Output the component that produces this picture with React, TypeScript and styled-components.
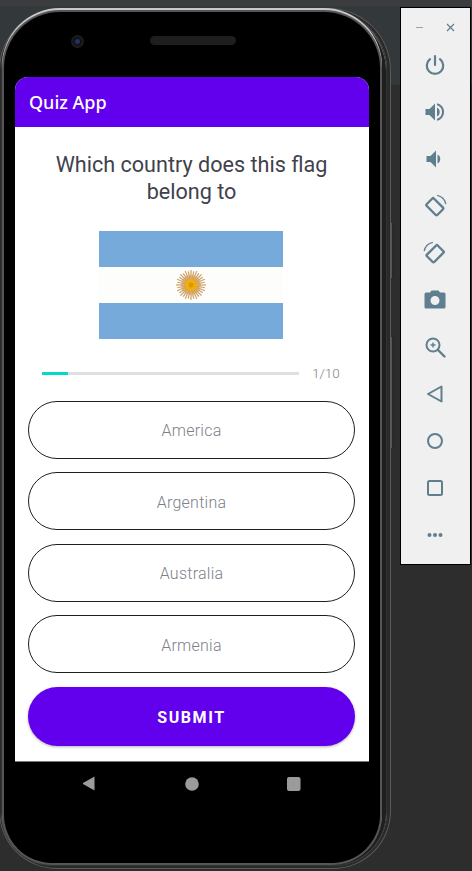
import React from "react";
import styled, { createGlobalStyle } from "styled-components";

const Global = createGlobalStyle`
  html, body { margin: 0; padding: 0; background: #2d2d2d; }
  * { box-sizing: border-box; }
`;

const Stage = styled.div`
  width: 472px;
  height: 871px;
  overflow: hidden;
  position: relative;
  background: linear-gradient(#3a3c3e 0, #3a3c3e 6px, #33383a 6px, #33383a 85px, #2d2d2d 85px);
  display: flex;
  align-items: flex-start;
`;

const Phone = styled.div`
  flex: none;
  margin: 8px 0 0 -1px;
  width: 392px;
  height: 861px;
  border-radius: 62px 62px 58px 58px;
  background: #2a2a2a;
  box-shadow: inset 0 0 0 1px #5a5a5a;
  padding: 2px 4px 3px 2px;
  position: relative;
`;

const Rim = styled.div`
  width: 100%;
  height: 100%;
  border-radius: 60px 60px 54px 54px;
  background: #1e1e1e;
  padding: 2px 7px 3px 3px;
  box-shadow: inset 0 0 0 1px #333, inset 0 1px 0 1px #8a8a8a;
`;

const Bezel = styled.div`
  width: 100%;
  height: 100%;
  border-radius: 56px 56px 48px 48px;
  background: #000;
  box-shadow: 0 0 0 2px #555, 0 -2px 0 2px #c8c8c8;
  padding: 65px 9px 0 11px;
  position: relative;
`;

const SideKey = styled.div<{ $top: number; $height: number }>`
  position: absolute;
  left: 392px;
  top: ${(p) => p.$top}px;
  width: 4px;
  height: ${(p) => p.$height}px;
  background: #2a2a2a;
  border-left: 1px solid #555;
`;

const Camera = styled.div`
  position: absolute;
  left: 67px;
  top: 23px;
  width: 13px;
  height: 13px;
  border-radius: 50%;
  background: radial-gradient(circle, #26305f 0 2px, #101014 3px, #1e1e1e 6px);
`;

const Speaker = styled.div`
  position: absolute;
  left: 146px;
  top: 24px;
  width: 86px;
  height: 9px;
  border-radius: 5px;
  background: #1e1e1e;
`;

const Screen = styled.div`
  width: 354px;
  height: 685px;
  background: #fff;
  border-radius: 13px 13px 0 0;
  overflow: hidden;
  display: flex;
  flex-direction: column;
`;

const AppBar = styled.div`
  flex: none;
  height: 50px;
  background: #6200ee;
  color: #fff;
  padding-left: 14px;
  display: flex;
  align-items: center;
  font: 500 18px "Noto Sans", sans-serif;
`;

const Content = styled.div`
  flex: 1;
  padding: 24px 14px 0 13px;
  display: flex;
  flex-direction: column;
  align-items: center;
`;

const Question = styled.div`
  width: 300px;
  text-align: center;
  color: #3f424c;
  font: 400 21.6px/27px Roboto, sans-serif;
`;

const Flag = styled.svg`
  display: block;
  margin: 26px 1px 0 0;
  flex: none;
`;

const ProgressRow = styled.div`
  width: 100%;
  margin: 25px 0 5px;
  padding: 0 1px 0 14px;
  height: 18px;
  display: flex;
  align-items: center;
`;

const Track = styled.div`
  width: 257px;
  height: 3px;
  margin-top: 1px;
  background: #e0e0e0;
`;

const Fill = styled.div`
  height: 100%;
  background: #03dac5;
`;

const Count = styled.span`
  margin-left: 13px;
  color: #7d8089;
  font: 300 13.5px Roboto, sans-serif;
`;

const Option = styled.div`
  flex: none;
  width: 327px;
  height: 58px;
  margin-top: 13.6px;
  padding-top: 2px;
  border: 1px solid #1f1f1f;
  border-radius: 29px;
  display: flex;
  align-items: center;
  justify-content: center;
  color: #7d8089;
  font: 300 16px Roboto, sans-serif;
  letter-spacing: 0.25px;
`;

const Submit = styled.div`
  flex: none;
  width: 327px;
  height: 59px;
  margin-top: 14px;
  padding-top: 2px;
  border-radius: 30px;
  background: #6200ee;
  color: #fff;
  display: flex;
  align-items: center;
  justify-content: center;
  letter-spacing: 1.6px;
  font: 700 16px Roboto, sans-serif;
  box-shadow: 0 1px 3px rgba(0, 0, 0, 0.3);
`;

const NavBar = styled.div`
  width: 354px;
  height: 44px;
  border-top: 1px solid #777;
  margin-top: -1px;
  display: flex;
  align-items: center;
  justify-content: center;
`;

const NavIcon = styled.svg`
  display: block;
  margin: 0 44px;
`;

const Panel = styled.div`
  flex: none;
  margin: 7px 0 0 9px;
  width: 71px;
  height: 558px;
  background: #f0f0f0;
  border: 1px solid #000;
  color: #5f7f8f;
  display: flex;
  flex-direction: column;
  align-items: center;
`;

const WindowControls = styled.div`
  height: 33px;
  width: 100%;
  padding: 6px 15px 0 14px;
  display: flex;
  align-items: center;
  justify-content: space-between;
`;

const ToolButton = styled.div`
  flex: none;
  height: 47px;
  width: 100%;
  padding-right: 2px;
  display: flex;
  align-items: center;
  justify-content: center;
`;

const Ico: React.FC<{ children: React.ReactNode; s?: number }> = ({ children, s = 24 }) => (
  <svg width={s} height={s} viewBox="0 0 24 24" fill="currentColor">
    {children}
  </svg>
);

const strokeProps = { fill: "none", stroke: "currentColor", strokeWidth: 2 };

const Sun = () => {
  const rays = Array.from({ length: 32 }, (_, i) => i * 11.25);
  return (
    <g>
      {rays.map((a) => (
        <line
          key={a}
          x1="92"
          y1="54"
          x2="92"
          y2={a % 22.5 === 0 ? 39 : 40}
          stroke="#cf9f5f"
          strokeWidth="1.2"
          transform={`rotate(${a} 92 54)`}
        />
      ))}
      <circle cx="92" cy="54" r="10" fill="#cf9f5f" opacity="0.6" />
      <circle cx="92" cy="54" r="6" fill="#f3ad05" />
      <circle cx="92" cy="54" r="2.4" fill="#d89604" />
    </g>
  );
};

export default function App() {
  return (
    <Stage>
      <Global />
      <Phone>
        <Rim>
          <Bezel>
            <Camera />
            <Speaker />
            <Screen>
              <AppBar>Quiz App</AppBar>
              <Content>
                <Question>Which country does this flag belong to</Question>
                <Flag width="184" height="108" viewBox="0 0 184 108">
                  <rect width="184" height="108" fill="#fdfdfb" />
                  <rect width="184" height="36" fill="#75aadb" />
                  <rect y="72" width="184" height="36" fill="#75aadb" />
                  <Sun />
                </Flag>
                <ProgressRow>
                  <Track>
                    <Fill style={{ width: `${(1 / 10) * 100}%` }} />
                  </Track>
                  <Count>1/10</Count>
                </ProgressRow>
                <Option>America</Option>
                <Option>Argentina</Option>
                <Option>Australia</Option>
                <Option>Armenia</Option>
                <Submit>SUBMIT</Submit>
              </Content>
            </Screen>
            <NavBar>
              <NavIcon width="14" height="15" viewBox="0 0 14 15">
                <path d="M11.500 0.500v14L-1 7.500z" fill="#9b9b9b" />
              </NavIcon>
              <NavIcon width="14" height="14" viewBox="0 0 14 14">
                <circle cx="7" cy="7" r="6.800" fill="#9b9b9b" />
              </NavIcon>
              <NavIcon width="14" height="14" viewBox="0 0 14 14">
                <rect width="13.500" height="14" rx="2" fill="#9b9b9b" />
              </NavIcon>
            </NavBar>
          </Bezel>
        </Rim>
        <SideKey $top={215} $height={55} />
        <SideKey $top={329} $height={111} />
      </Phone>
      <Panel>
        <WindowControls>
          <svg width="9" height="9" viewBox="0 0 9 9"><path d="M1 4.500h7" stroke="#8fa5b0" strokeWidth="1" /></svg>
          <svg width="9" height="9" viewBox="0 0 9 9"><path d="M1 1l7 7M8 1L1 8" stroke="#5f7f8f" strokeWidth="1.200" /></svg>
        </WindowControls>
        <ToolButton>
          <Ico>
            <path d="M12 3v9" {...strokeProps} strokeWidth={2.2} strokeLinecap="round" />
            <path d="M7 6.200a8.200 8.200 0 1 0 10 0" {...strokeProps} strokeWidth={2.2} strokeLinecap="round" />
          </Ico>
        </ToolButton>
        <ToolButton>
          <Ico>
            <path d="M2.500 9v6h4l5.500 5.500v-17L6.500 9z" />
            <path d="M14 7.500a5 5 0 0 1 0 9z" />
            <path d="M14 3.200v2.100a7 7 0 0 1 0 13.400v2.100a9 9 0 0 0 0-17.600z" />
          </Ico>
        </ToolButton>
        <ToolButton>
          <Ico>
            <path d="M3.500 9v6h4l5.500 5.500v-17L7.500 9z" />
            <path d="M14.500 7.500a5 5 0 0 1 0 9z" />
          </Ico>
        </ToolButton>
        <ToolButton>
          <Ico s={26}>
            <rect x="5" y="8" width="14" height="9.500" rx="1" transform="rotate(45 12 12.500)" {...strokeProps} strokeWidth={2.2} />
            <path d="M14 2.200a10.500 10.500 0 0 1 8 8" {...strokeProps} strokeWidth={1.2} />
          </Ico>
        </ToolButton>
        <ToolButton>
          <Ico s={26}>
            <rect x="5" y="8" width="14" height="9.500" rx="1" transform="rotate(-45 12 12.500)" {...strokeProps} strokeWidth={2.2} />
            <path d="M10 2.200a10.500 10.500 0 0 0-8 8" {...strokeProps} strokeWidth={1.2} />
          </Ico>
        </ToolButton>
        <ToolButton>
          <Ico>
            <path fillRule="evenodd" d="M8.500 2.500L7 4.500H3a1.500 1.500 0 0 0-1.500 1.500v13A1.500 1.500 0 0 0 3 20.500h18a1.500 1.500 0 0 0 1.500-1.500V6A1.500 1.500 0 0 0 21 4.500h-4l-1.500-2zM12 8a4.500 4.500 0 1 1 0 9 4.500 4.500 0 0 1 0-9z" />
          </Ico>
        </ToolButton>
        <ToolButton>
          <Ico>
            <circle cx="10" cy="10" r="6.500" {...strokeProps} />
            <path d="M15 15l6.500 6.500" {...strokeProps} strokeWidth={2.4} strokeLinecap="round" />
            <path d="M10 7.500v5M7.500 10h5" {...strokeProps} strokeWidth={1.4} />
          </Ico>
        </ToolButton>
        <ToolButton>
          <Ico>
            <path d="M18.500 4.500v15L5 12z" {...strokeProps} strokeLinejoin="round" />
          </Ico>
        </ToolButton>
        <ToolButton>
          <Ico>
            <circle cx="12" cy="12" r="7" {...strokeProps} />
          </Ico>
        </ToolButton>
        <ToolButton>
          <Ico>
            <rect x="5" y="5" width="14" height="14" rx="1.500" {...strokeProps} />
          </Ico>
        </ToolButton>
        <ToolButton>
          <Ico>
            <circle cx="6.500" cy="12" r="2" />
            <circle cx="12" cy="12" r="2" />
            <circle cx="17.500" cy="12" r="2" />
          </Ico>
        </ToolButton>
      </Panel>
    </Stage>
  );
}
